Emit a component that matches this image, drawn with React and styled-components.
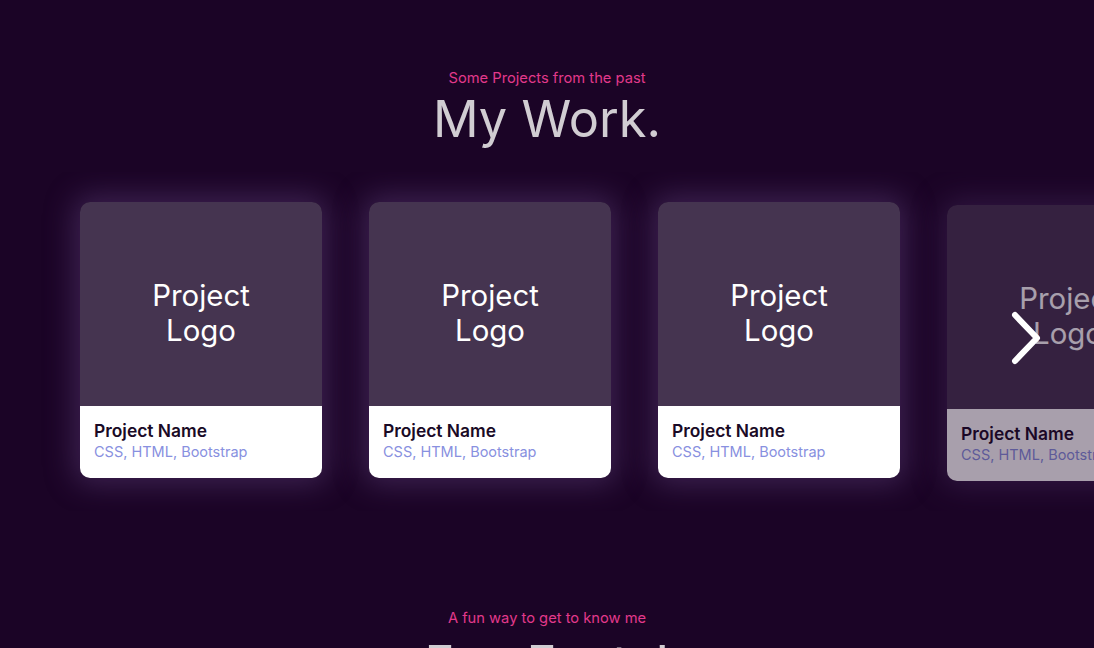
import styled, { createGlobalStyle } from 'styled-components';

const GlobalStyle = createGlobalStyle`
  html, body {
    margin: 0;
    padding: 0;
    background: #1b0426;
    overflow: hidden;
  }
  body {
    font-family: Inter, 'Noto Sans', sans-serif;
  }
`;

const Page = styled.div`
  width: 1094px;
  height: 648px;
  background: #1b0426;
  overflow: hidden;
`;

const Section = styled.section`
  display: flex;
  flex-direction: column;
  align-items: center;
  padding-top: ${p => p.$top || 0}px;
`;

const Kicker = styled.p`
  margin: 0;
  font-size: 14.7px;
  line-height: 17px;
  color: #e2398b;
`;

const Title = styled.h2`
  margin: ${p => p.$gap ?? 3}px 0 0;
  font-size: 50.5px;
  line-height: 58px;
  font-weight: 400;
  color: #d1cdd2;
`;

const CarouselWrap = styled.div`
  position: relative;
  width: 100%;
  margin-top: 54px;
  overflow: hidden;
  padding: 30px 0;
  margin-bottom: -30px;
  transform: translateY(-30px);
`;

const Track = styled.div`
  display: flex;
  gap: 47px;
  padding-left: 80px;
`;

const Card = styled.div`
  flex: 0 0 242px;
  height: 276px;
  border-radius: 10px;
  overflow: hidden;
  display: flex;
  flex-direction: column;
  box-shadow: 0 0 30px 6px rgba(105, 70, 135, 0.45);
  opacity: ${p => (p.$faded ? 0.62 : 1)};
  margin-top: ${p => (p.$faded ? 3 : 0)}px;
`;

const Logo = styled.div`
  height: 204px;
  background: #453450;
  display: flex;
  align-items: center;
  justify-content: center;
  text-align: center;
  color: #ffffff;
  font-size: 29.4px;
  line-height: 35px;
  padding-top: 18px;
  box-sizing: border-box;
`;

const Info = styled.div`
  flex: 1;
  background: #ffffff;
  padding: 14px 14px 0;
`;

const Name = styled.div`
  font-size: 17.4px;
  line-height: 22px;
  font-weight: 600;
  color: #1a0a26;
`;

const Tech = styled.div`
  font-size: 14.5px;
  line-height: 20px;
  color: #8890e0;
`;

const NextButton = styled.button`
  position: absolute;
  right: 50px;
  top: 138px;
  width: 36px;
  height: 56px;
  padding: 0;
  border: none;
  background: transparent;
  cursor: pointer;
`;

const projects = [0, 1, 2, 3];

const App = () => (
  <Page>
    <GlobalStyle />
    <Section $top={70}>
      <Kicker>Some Projects from the past</Kicker>
      <Title>My Work.</Title>
      <CarouselWrap>
        <Track>
          {projects.map(i => (
            <Card key={i} $faded={i === 3}>
              <Logo>Project<br />Logo</Logo>
              <Info>
                <Name>Project Name</Name>
                <Tech>CSS, HTML, Bootstrap</Tech>
              </Info>
            </Card>
          ))}
        </Track>
        <NextButton aria-label="Next">
          <svg width="36" height="56" viewBox="0 0 36 56">
            <path d="M7 5 L29 28 L7 51" fill="none" stroke="#ffffff" strokeWidth="6" strokeLinecap="round" strokeLinejoin="round" />
          </svg>
        </NextButton>
      </CarouselWrap>
    </Section>
    <Section $top={99}>
      <Kicker>A fun way to get to know me</Kicker>
      <Title $gap={8}>Fun Facts!</Title>
    </Section>
  </Page>
);

export default App;
